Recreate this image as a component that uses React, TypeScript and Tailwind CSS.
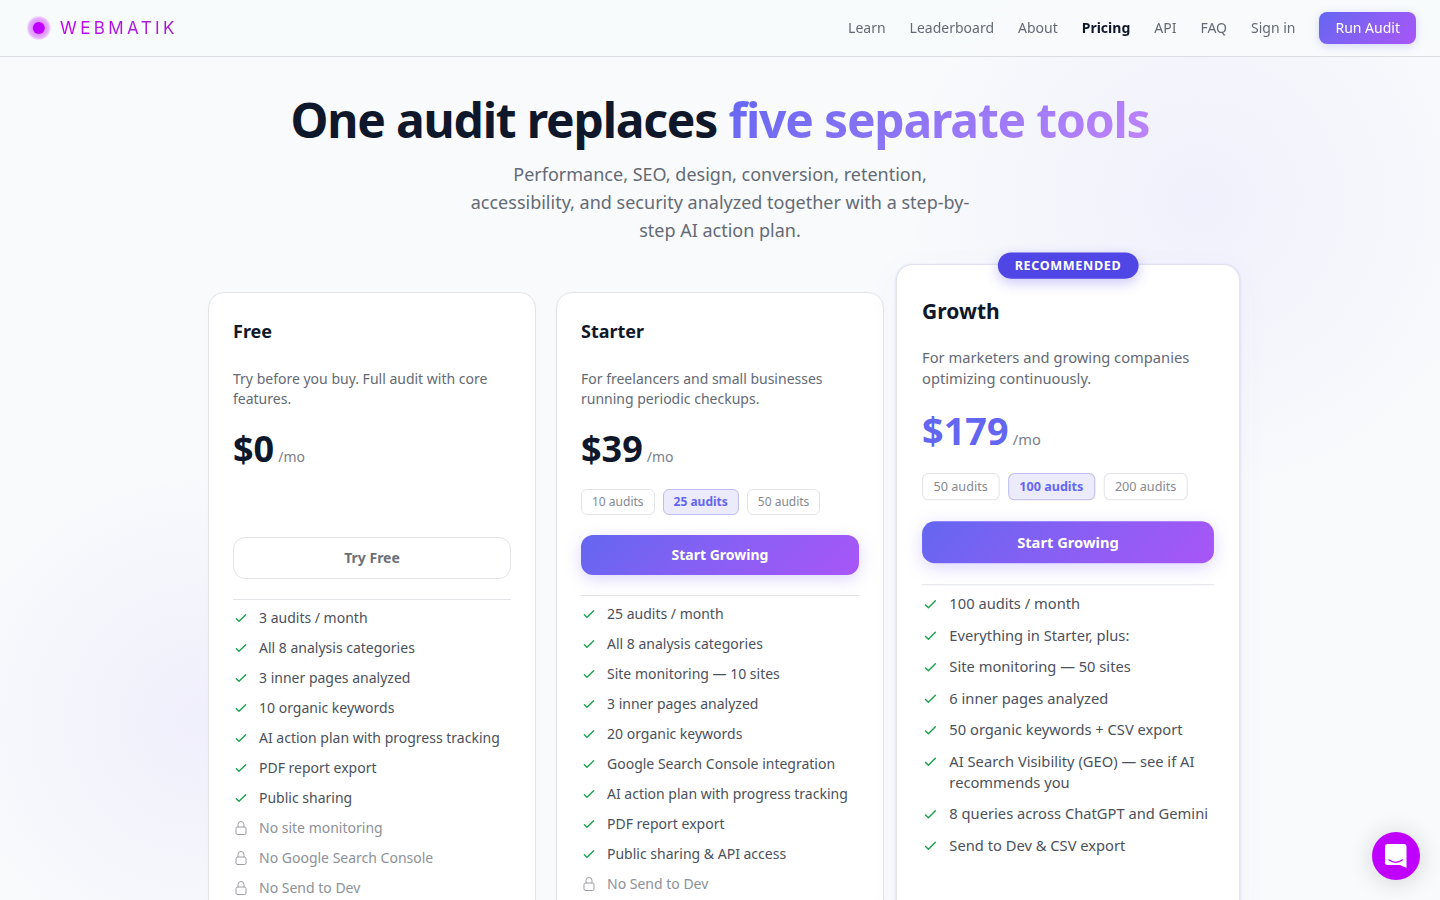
import clsx from "clsx";

type Feature = { label: string; locked?: boolean };

type Plan = {
  name: string;
  description: string;
  price: string;
  tiers: string[];
  activeTier?: string;
  cta: string;
  recommended?: boolean;
  features: Feature[];
};

const navLinks = ["Learn", "Leaderboard", "About", "Pricing", "API", "FAQ", "Sign in"];

const plans: Plan[] = [
  {
    name: "Free",
    description: "Try before you buy. Full audit with core features.",
    price: "$0",
    tiers: [],
    cta: "Try Free",
    features: [
      { label: "3 audits / month" },
      { label: "All 8 analysis categories" },
      { label: "3 inner pages analyzed" },
      { label: "10 organic keywords" },
      { label: "AI action plan with progress tracking" },
      { label: "PDF report export" },
      { label: "Public sharing" },
      { label: "No site monitoring", locked: true },
      { label: "No Google Search Console", locked: true },
      { label: "No Send to Dev", locked: true },
    ],
  },
  {
    name: "Starter",
    description: "For freelancers and small businesses running periodic checkups.",
    price: "$39",
    tiers: ["10 audits", "25 audits", "50 audits"],
    activeTier: "25 audits",
    cta: "Start Growing",
    features: [
      { label: "25 audits / month" },
      { label: "All 8 analysis categories" },
      { label: "Site monitoring — 10 sites" },
      { label: "3 inner pages analyzed" },
      { label: "20 organic keywords" },
      { label: "Google Search Console integration" },
      { label: "AI action plan with progress tracking" },
      { label: "PDF report export" },
      { label: "Public sharing & API access" },
      { label: "No Send to Dev", locked: true },
    ],
  },
  {
    name: "Growth",
    description: "For marketers and growing companies optimizing continuously.",
    price: "$179",
    tiers: ["50 audits", "100 audits", "200 audits"],
    activeTier: "100 audits",
    cta: "Start Growing",
    recommended: true,
    features: [
      { label: "100 audits / month" },
      { label: "Everything in Starter, plus:" },
      { label: "Site monitoring — 50 sites" },
      { label: "6 inner pages analyzed" },
      { label: "50 organic keywords + CSV export" },
      { label: "AI Search Visibility (GEO) — see if AI recommends you" },
      { label: "8 queries across ChatGPT and Gemini" },
      { label: "Send to Dev & CSV export" },
    ],
  },
];

const CheckIcon = () => (
  <svg className="mt-[2px] h-4 w-4 shrink-0 text-[#16a34a]" viewBox="0 0 24 24" fill="none" stroke="currentColor" strokeWidth="2" strokeLinecap="round" strokeLinejoin="round" aria-hidden="true">
    <path d="M5 13l4 4L19 7" />
  </svg>
);

const LockIcon = () => (
  <svg className="mt-[2px] h-4 w-4 shrink-0 text-[#9a9ea6]" viewBox="0 0 24 24" fill="none" stroke="currentColor" strokeWidth="1.5" strokeLinecap="round" strokeLinejoin="round" aria-hidden="true">
    <path d="M16.5 10.5V6.75a4.5 4.5 0 1 0-9 0v3.75m-.75 11.25h10.5a2.25 2.25 0 0 0 2.25-2.25v-6.75a2.25 2.25 0 0 0-2.25-2.25H6.75a2.25 2.25 0 0 0-2.25 2.25v6.75a2.25 2.25 0 0 0 2.25 2.25Z" />
  </svg>
);

const Header = () => (
  <header className="sticky top-0 z-20 flex h-[57px] items-center justify-between border-b border-[#dcdde2] bg-[#f8fafc]/85 px-6 backdrop-blur-md">
    <a href="#" className="flex items-center gap-2">
      <svg className="h-7 w-7" viewBox="0 0 28 28" aria-hidden="true">
        <defs>
          <radialGradient id="halo">
            <stop offset="0.5" stopColor="#bf00ff" stopOpacity="0.42" />
            <stop offset="0.8" stopColor="#bf00ff" stopOpacity="0.3" />
            <stop offset="1" stopColor="#bf00ff" stopOpacity="0" />
          </radialGradient>
        </defs>
        <circle cx="14.8" cy="14" r="12.5" fill="url(#halo)" />
        <circle cx="14.8" cy="14" r="6" fill="#bf00ff" />
      </svg>
      <span className="bg-gradient-to-r from-[#c000f0] to-[#a020d0] bg-clip-text font-['Inter',sans-serif] text-[17px] leading-6 tracking-[0.2em] text-transparent">
        WEBMATIK
      </span>
    </a>
    <nav className="flex items-center gap-6 text-sm text-[#646a75]">
      {navLinks.map((link) => (
        <a key={link} href="#" className={clsx(link === "Pricing" && "font-bold text-[#0f172a]")}>
          {link}
        </a>
      ))}
      <button className="h-8 rounded-lg bg-linear-135 from-[#6366f1] to-[#a855f7] px-4 text-white shadow-[0_2px_8px_rgba(99,102,241,0.25)]">
        Run Audit
      </button>
    </nav>
  </header>
);

const PlanCard = ({ plan }: { plan: Plan }) => (
  <article
    className={clsx(
      "relative flex flex-col rounded-2xl border px-6 pb-6",
      plan.recommended
        ? "z-10 origin-top -translate-y-7 scale-105 border-[#e0e1ec] bg-white/95 pt-[30px] shadow-[0_0_2px_rgba(99,102,241,0.12),0_8px_32px_rgba(99,102,241,0.04)]"
        : "border-[#e2e4e8] bg-white pt-6 shadow-[0_1px_3px_rgba(0,0,0,0.03)]",
    )}
  >
    {plan.recommended && (
      <span className="absolute -top-3 left-1/2 -translate-x-1/2 rounded-full bg-[#4f46e5] px-4 py-1 text-xs leading-[17px] font-bold tracking-wider text-white uppercase shadow-[0_4px_12px_rgba(79,70,229,0.3)]">
        Recommended
      </span>
    )}
    <h2 className={clsx("leading-7 font-bold text-[#0f172a]", plan.recommended ? "mb-5 text-xl" : "mb-6 text-lg")}>
      {plan.name}
    </h2>
    <p className="mb-5 h-10 text-sm leading-5 text-[#646a75]">{plan.description}</p>
    <div className="mb-5 flex items-baseline gap-1">
      <span className={clsx("text-4xl font-bold", plan.recommended ? "text-[#6366f1]" : "text-[#0f172a]")}>{plan.price}</span>
      <span className="text-sm text-[#7b808a]">/mo</span>
    </div>
    {plan.tiers.length > 0 ? (
      <div className="mb-5 flex gap-2">
        {plan.tiers.map((tier) => (
          <button
            key={tier}
            className={clsx(
              "rounded-md border px-2.5 py-1 text-xs",
              tier === plan.activeTier
                ? "border-[#c0bdf0] bg-[#ebebfc] font-bold text-[#6366f1]"
                : "border-[#e2e4e8] text-[#858992]",
            )}
          >
            {tier}
          </button>
        ))}
      </div>
    ) : (
      <div className="mb-5 h-7" />
    )}
    <button
      className={clsx(
        "mb-5 rounded-xl py-2.5 text-sm font-bold",
        plan.tiers.length > 0
          ? "bg-linear-135 from-[#6366f1] to-[#a855f7] text-white shadow-[0_4px_16px_rgba(124,92,246,0.25)]"
          : "border border-[#e2e4e8] text-[#6b7079]",
      )}
    >
      {plan.cta}
    </button>
    <ul className="flex flex-col gap-2.5 border-t border-[#e2e4e8] pt-2 text-sm leading-5">
      {plan.features.map((feature) => (
        <li key={feature.label} className={clsx("flex items-start gap-2.5", feature.locked ? "text-[#8d9199]" : "text-[#4b515c]")}>
          {feature.locked ? <LockIcon /> : <CheckIcon />}
          <span>{feature.label}</span>
        </li>
      ))}
    </ul>
  </article>
);

export default function App() {
  return (
    <div className="relative min-h-screen overflow-x-clip bg-[#f8fafc] font-['Noto_Sans',sans-serif]">
      <div className="pointer-events-none absolute inset-0 overflow-hidden">
        <div className="absolute -top-[100px] -right-[60px] h-[600px] w-[600px] rounded-full bg-[radial-gradient(circle,rgba(99,80,241,0.055),transparent_70%)]" />
        <div className="absolute top-[470px] -left-[50px] h-[500px] w-[500px] rounded-full bg-[radial-gradient(circle,rgba(124,80,246,0.065),transparent_70%)]" />
      </div>

      <Header />

      <main className="relative mx-auto max-w-5xl pt-[39px] pb-24">
        <div className="mb-12 text-center">
          <h1 className="mb-4 text-5xl leading-12 font-bold tracking-tight text-[#0f172a]">
            One audit replaces{" "}
            <span className="bg-linear-135 from-[#6366f1] to-[#c084fc] bg-clip-text text-transparent">five separate tools</span>
          </h1>
          <p className="mx-auto max-w-lg text-lg leading-7 text-[#646a75]">
            Performance, SEO, design, conversion, retention, accessibility, and security analyzed together with a step-by-step AI action plan.
          </p>
        </div>
        <div className="grid grid-cols-3 gap-5">
          {plans.map((plan) => (
            <PlanCard key={plan.name} plan={plan} />
          ))}
        </div>
      </main>

      <button aria-label="Open chat" className="fixed right-5 bottom-5 z-30 flex h-12 w-12 items-center justify-center rounded-full bg-[#bf00ff] shadow-[0_2px_24px_rgba(0,0,0,0.16)]">
        <svg className="h-6 w-6" viewBox="0 0 24 24" fill="none" aria-hidden="true">
          <path d="M3.500 0h16.500a2.500 2.500 0 0 1 2.500 2.500v21.500c-2.500-1-5-3-8-3H3.500a2.500 2.500 0 0 1-2.500-2.500V2.500A2.500 2.500 0 0 1 3.500 0Z" fill="#fff" />
          <path d="M4.800 15.800c4.200 3 9.600 3 13.800 0" stroke="#bf00ff" strokeWidth="1.200" strokeLinecap="round" />
        </svg>
      </button>
    </div>
  );
}
